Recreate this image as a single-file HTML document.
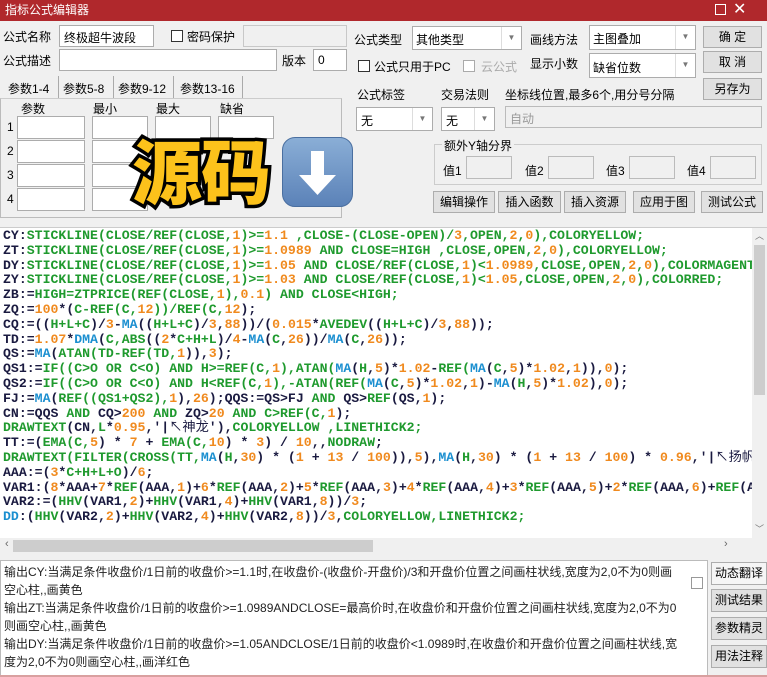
<!DOCTYPE html>
<html><head><meta charset="utf-8"><style>
*{margin:0;padding:0;box-sizing:border-box}
body{width:767px;height:677px;background:#f0f0f0;font-family:"Liberation Sans","Noto Sans CJK SC",sans-serif;font-size:12px;color:#000;position:relative;overflow:hidden}
.a{position:absolute}
.in{position:absolute;background:#fff;border:1px solid #acacac}
.dis{position:absolute;background:#f0f0f0;border:1px solid #c8c8c8}
.btn{position:absolute;background:#e1e1e1;border:1px solid #adadad;text-align:center;font-size:12px;line-height:20px}
.cb{position:absolute;width:12px;height:12px;border:1px solid #333;background:#fff}
.dd{position:absolute;right:0;top:0;bottom:0;width:20px;border-left:1px solid #ddd;text-align:center;color:#777;font-size:8px;line-height:22px}
.code{position:absolute;left:0;top:228px;width:752px;height:310px;background:#fff;overflow:hidden;font-family:"Liberation Mono","Noto Sans CJK SC",monospace;font-weight:bold;font-size:13.2px;line-height:14.8px;padding-top:1px;white-space:pre;color:#1a1a40;padding-left:3px}
.g{color:#1f9a2e}.o{color:#f08a1e}.b{color:#1b8fd0}
</style></head><body>
<div class="a" style="left:0;top:0;width:767px;height:21px;background:#b0282c;color:#fff;font-size:12px;line-height:21px;padding-left:5px">指标公式编辑器</div>
<div class="a" style="left:715px;top:4px;width:11px;height:11px;border:1px solid #fff"></div>
<div class="a" style="left:733px;top:0;color:#fff;font-size:16px;line-height:20px">✕</div>

<div class="a" style="left:3px;top:28px">公式名称</div>
<div class="in" style="left:59px;top:25px;width:95px;height:22px;padding:3px 4px">终极超牛波段</div>
<div class="cb" style="left:171px;top:30px"></div>
<div class="a" style="left:187px;top:28px">密码保护</div>
<div class="dis" style="left:243px;top:25px;width:104px;height:22px"></div>
<div class="a" style="left:3px;top:52px">公式描述</div>
<div class="in" style="left:59px;top:49px;width:218px;height:22px"></div>
<div class="a" style="left:282px;top:52px">版本</div>
<div class="in" style="left:313px;top:49px;width:34px;height:22px;padding:3px 4px">0</div>

<div class="a" style="left:8px;top:80px">参数1-4</div>
<div class="a" style="left:58px;top:76px;width:1px;height:22px;background:#aaa"></div>
<div class="a" style="left:63px;top:80px">参数5-8</div>
<div class="a" style="left:113px;top:76px;width:1px;height:22px;background:#aaa"></div>
<div class="a" style="left:118px;top:80px">参数9-12</div>
<div class="a" style="left:173px;top:76px;width:1px;height:22px;background:#aaa"></div>
<div class="a" style="left:180px;top:80px">参数13-16</div>
<div class="a" style="left:242px;top:76px;width:1px;height:22px;background:#aaa"></div>
<div class="a" style="left:0;top:98px;width:342px;height:120px;border:1px solid #bbb;border-top:1px solid #ccc;background:#f0f0f0"></div>
<div class="a" style="left:21px;top:100px">参数</div>
<div class="a" style="left:93px;top:100px">最小</div>
<div class="a" style="left:156px;top:100px">最大</div>
<div class="a" style="left:220px;top:100px">缺省</div>
<div class="a" style="left:7px;top:120px">1</div><div class="a" style="left:7px;top:144px">2</div><div class="a" style="left:7px;top:168px">3</div><div class="a" style="left:7px;top:192px">4</div>
<div class="in" style="left:17px;top:116px;width:68px;height:23px"></div><div class="in" style="left:92px;top:116px;width:56px;height:23px"></div><div class="in" style="left:155px;top:116px;width:56px;height:23px"></div><div class="in" style="left:218px;top:116px;width:56px;height:23px"></div>
<div class="in" style="left:17px;top:140px;width:68px;height:23px"></div><div class="in" style="left:92px;top:140px;width:56px;height:23px"></div>
<div class="in" style="left:17px;top:164px;width:68px;height:23px"></div><div class="in" style="left:92px;top:164px;width:56px;height:23px"></div>
<div class="in" style="left:17px;top:188px;width:68px;height:23px"></div><div class="in" style="left:92px;top:188px;width:56px;height:23px"></div>

<div class="a" style="left:132px;top:124px;font-family:'Noto Sans CJK SC',sans-serif;font-weight:900;font-size:70px;line-height:90px;color:#fcc21b;-webkit-text-stroke:7px #000;paint-order:stroke fill;letter-spacing:-1px">源码</div>
<div class="a" style="left:282px;top:137px;width:71px;height:70px;border-radius:13px;background:linear-gradient(#8aaed6,#5b82b8);border:1px solid #4a6fa0"></div>
<svg class="a" style="left:282px;top:137px" width="71" height="70"><path d="M29 14h13v24h12L35.5 58 17 38h12z" fill="#fff"/></svg>

<div class="a" style="left:354px;top:31px">公式类型</div>
<div class="in" style="left:412px;top:26px;width:110px;height:24px;padding:4px 3px">其他类型<div class="dd">▼</div></div>
<div class="cb" style="left:358px;top:60px"></div>
<div class="a" style="left:374px;top:58px">公式只用于PC</div>
<div class="cb" style="left:463px;top:60px;border-color:#aaa"></div>
<div class="a" style="left:481px;top:58px;color:#aaa">云公式</div>
<div class="a" style="left:530px;top:31px">画线方法</div>
<div class="in" style="left:589px;top:25px;width:107px;height:25px;padding:4px 3px">主图叠加<div class="dd">▼</div></div>
<div class="a" style="left:530px;top:55px">显示小数</div>
<div class="in" style="left:589px;top:53px;width:107px;height:25px;padding:5px 3px">缺省位数<div class="dd">▼</div></div>
<div class="btn" style="left:703px;top:26px;width:59px;height:22px">确 定</div>
<div class="btn" style="left:703px;top:51px;width:59px;height:22px">取 消</div>
<div class="btn" style="left:703px;top:78px;width:59px;height:22px">另存为</div>
<div class="a" style="left:357px;top:86px">公式标签</div>
<div class="a" style="left:441px;top:86px">交易法则</div>
<div class="a" style="left:505px;top:86px">坐标线位置,最多6个,用分号分隔</div>
<div class="in" style="left:356px;top:107px;width:77px;height:24px;padding:4px 4px">无<div class="dd">▼</div></div>
<div class="in" style="left:441px;top:107px;width:54px;height:24px;padding:4px 4px">无<div class="dd">▼</div></div>
<div class="dis" style="left:505px;top:106px;width:257px;height:22px;padding:3px 4px;color:#999;border-color:#bbb">自动</div>
<div class="a" style="left:434px;top:144px;width:328px;height:41px;border:1px solid #ccc"></div>
<div class="a" style="left:442px;top:137px;background:#f0f0f0;padding:0 2px">额外Y轴分界</div>
<div class="a" style="left:443px;top:162px">值1</div><div class="dis" style="left:466px;top:156px;width:46px;height:23px;border-color:#bbb"></div>
<div class="a" style="left:525px;top:162px">值2</div><div class="dis" style="left:548px;top:156px;width:46px;height:23px;border-color:#bbb"></div>
<div class="a" style="left:606px;top:162px">值3</div><div class="dis" style="left:629px;top:156px;width:46px;height:23px;border-color:#bbb"></div>
<div class="a" style="left:687px;top:162px">值4</div><div class="dis" style="left:710px;top:156px;width:46px;height:23px;border-color:#bbb"></div>
<div class="btn" style="left:433px;top:191px;width:62px;height:22px">编辑操作</div>
<div class="btn" style="left:498px;top:191px;width:63px;height:22px">插入函数</div>
<div class="btn" style="left:564px;top:191px;width:62px;height:22px">插入资源</div>
<div class="btn" style="left:633px;top:191px;width:62px;height:22px">应用于图</div>
<div class="btn" style="left:701px;top:191px;width:62px;height:22px">测试公式</div>

<div class="code">CY:<span class="g">STICKLINE(CLOSE/REF(CLOSE,</span><span class="o">1</span><span class="g">)&gt;=</span><span class="o">1.1</span><span class="g"> ,CLOSE-(CLOSE-OPEN)/</span><span class="o">3</span><span class="g">,OPEN,</span><span class="o">2</span><span class="g">,</span><span class="o">0</span><span class="g">),COLORYELLOW;</span>
ZT:<span class="g">STICKLINE(CLOSE/REF(CLOSE,</span><span class="o">1</span><span class="g">)&gt;=</span><span class="o">1.0989</span><span class="g"> AND CLOSE=HIGH ,CLOSE,OPEN,</span><span class="o">2</span><span class="g">,</span><span class="o">0</span><span class="g">),COLORYELLOW;</span>
DY:<span class="g">STICKLINE(CLOSE/REF(CLOSE,</span><span class="o">1</span><span class="g">)&gt;=</span><span class="o">1.05</span><span class="g"> AND CLOSE/REF(CLOSE,</span><span class="o">1</span><span class="g">)&lt;</span><span class="o">1.0989</span><span class="g">,CLOSE,OPEN,</span><span class="o">2</span><span class="g">,</span><span class="o">0</span><span class="g">),COLORMAGENTA;</span>
ZY:<span class="g">STICKLINE(CLOSE/REF(CLOSE,</span><span class="o">1</span><span class="g">)&gt;=</span><span class="o">1.03</span><span class="g"> AND CLOSE/REF(CLOSE,</span><span class="o">1</span><span class="g">)&lt;</span><span class="o">1.05</span><span class="g">,CLOSE,OPEN,</span><span class="o">2</span><span class="g">,</span><span class="o">0</span><span class="g">),COLORRED;</span>
ZB:=<span class="g">HIGH=ZTPRICE(REF(CLOSE,</span><span class="o">1</span><span class="g">),</span><span class="o">0.1</span><span class="g">) AND CLOSE&lt;HIGH;</span>
ZQ:=<span class="o">100</span>*(<span class="g">C-REF(C,</span><span class="o">12</span><span class="g">))/REF(C,</span><span class="o">12</span>);
CQ:=((<span class="g">H+L+C</span>)/<span class="o">3</span>-<span class="b">MA</span>((<span class="g">H+L+C</span>)/<span class="o">3</span>,<span class="o">88</span>))/(<span class="o">0.015</span>*<span class="g">AVEDEV</span>((<span class="g">H+L+C</span>)/<span class="o">3</span>,<span class="o">88</span>));
TD:=<span class="o">1.07</span>*<span class="b">DMA</span>(<span class="g">C,ABS</span>((<span class="o">2</span>*<span class="g">C+H+L</span>)/<span class="o">4</span>-<span class="b">MA</span>(<span class="g">C</span>,<span class="o">26</span>))/<span class="b">MA</span>(<span class="g">C</span>,<span class="o">26</span>));
QS:=<span class="b">MA</span>(<span class="g">ATAN(TD-REF(TD,</span><span class="o">1</span>)),<span class="o">3</span>);
QS1:=<span class="g">IF((C&gt;O OR C&lt;O) AND H&gt;=REF(C,</span><span class="o">1</span><span class="g">),ATAN(</span><span class="b">MA</span>(<span class="g">H</span>,<span class="o">5</span>)*<span class="o">1.02</span>-<span class="g">REF(</span><span class="b">MA</span>(<span class="g">C</span>,<span class="o">5</span>)*<span class="o">1.02</span>,<span class="o">1</span>)),<span class="o">0</span>);
QS2:=<span class="g">IF((C&gt;O OR C&lt;O) AND H&lt;REF(C,</span><span class="o">1</span><span class="g">),-ATAN(REF(</span><span class="b">MA</span>(<span class="g">C</span>,<span class="o">5</span>)*<span class="o">1.02</span>,<span class="o">1</span>)-<span class="b">MA</span>(<span class="g">H</span>,<span class="o">5</span>)*<span class="o">1.02</span>),<span class="o">0</span>);
FJ:=<span class="b">MA</span>(<span class="g">REF((QS1+QS2),</span><span class="o">1</span>),<span class="o">26</span>);QQS:=QS&gt;FJ <span class="g">AND</span> QS&gt;<span class="g">REF</span>(QS,<span class="o">1</span>);
CN:=QQS <span class="g">AND</span> CQ&gt;<span class="o">200</span> <span class="g">AND</span> ZQ&gt;<span class="o">20</span> <span class="g">AND C&gt;REF(C,</span><span class="o">1</span>);
<span class="g">DRAWTEXT</span>(CN,<span class="g">L</span>*<span class="o">0.95</span>,'|<span style="font-weight:normal">↖神龙</span>'),<span class="g">COLORYELLOW ,LINETHICK2;</span>
TT:=(<span class="g">EMA(C,</span><span class="o">5</span>) * <span class="o">7</span> + <span class="g">EMA(C,</span><span class="o">10</span>) * <span class="o">3</span>) / <span class="o">10</span>,,<span class="g">NODRAW</span>;
<span class="g">DRAWTEXT(FILTER(CROSS(TT,</span><span class="b">MA</span>(<span class="g">H</span>,<span class="o">30</span>) * (<span class="o">1</span> + <span class="o">13</span> / <span class="o">100</span>)),<span class="o">5</span>),<span class="b">MA</span>(<span class="g">H</span>,<span class="o">30</span>) * (<span class="o">1</span> + <span class="o">13</span> / <span class="o">100</span>) * <span class="o">0.96</span>,'|<span style="font-weight:normal">↖扬帆</span>');
AAA:=(<span class="o">3</span>*<span class="g">C+H+L+O</span>)/<span class="o">6</span>;
VAR1:(<span class="o">8</span>*AAA+<span class="o">7</span>*<span class="g">REF</span>(AAA,<span class="o">1</span>)+<span class="o">6</span>*<span class="g">REF</span>(AAA,<span class="o">2</span>)+<span class="o">5</span>*<span class="g">REF</span>(AAA,<span class="o">3</span>)+<span class="o">4</span>*<span class="g">REF</span>(AAA,<span class="o">4</span>)+<span class="o">3</span>*<span class="g">REF</span>(AAA,<span class="o">5</span>)+<span class="o">2</span>*<span class="g">REF</span>(AAA,<span class="o">6</span>)+<span class="g">REF</span>(AAA,<span class="o">8</span>))/<span class="o">36</span>;
VAR2:=(<span class="g">HHV</span>(VAR1,<span class="o">2</span>)+<span class="g">HHV</span>(VAR1,<span class="o">4</span>)+<span class="g">HHV</span>(VAR1,<span class="o">8</span>))/<span class="o">3</span>;
<span class="b">DD</span>:(<span class="g">HHV</span>(VAR2,<span class="o">2</span>)+<span class="g">HHV</span>(VAR2,<span class="o">4</span>)+<span class="g">HHV</span>(VAR2,<span class="o">8</span>))/<span class="o">3</span>,<span class="g">COLORYELLOW,LINETHICK2;</span></div>
<div class="a" style="left:0;top:227px;width:767px;height:1px;background:#ccc"></div>
<div class="a" style="left:752px;top:228px;width:15px;height:310px;background:#f0f0f0"></div>
<div class="a" style="left:754px;top:245px;width:11px;height:150px;background:#cdcdcd"></div>
<div class="a" style="left:755px;top:229px;font-size:9px;color:#777">︿</div>
<div class="a" style="left:755px;top:522px;font-size:9px;color:#777">﹀</div>
<div class="a" style="left:0;top:538px;width:752px;height:16px;background:#f0f0f0"></div>
<div class="a" style="left:13px;top:540px;width:360px;height:12px;background:#cdcdcd"></div>
<div class="a" style="left:5px;top:538px;font-size:11px;color:#666">‹</div>
<div class="a" style="left:724px;top:538px;font-size:11px;color:#666">›</div>

<div class="a" style="left:0;top:560px;width:708px;height:117px;background:#fff;border:1px solid #bbb"></div>
<div class="a" style="left:4px;top:563px;width:680px;font-size:12px;line-height:18px;color:#222">输出CY:当满足条件收盘价/1日前的收盘价&gt;=1.1时,在收盘价-(收盘价-开盘价)/3和开盘价位置之间画柱状线,宽度为2,0不为0则画空心柱,,画黄色<br>输出ZT:当满足条件收盘价/1日前的收盘价&gt;=1.0989ANDCLOSE=最高价时,在收盘价和开盘价位置之间画柱状线,宽度为2,0不为0则画空心柱,,画黄色<br>输出DY:当满足条件收盘价/1日前的收盘价&gt;=1.05ANDCLOSE/1日前的收盘价&lt;1.0989时,在收盘价和开盘价位置之间画柱状线,宽度为2,0不为0则画空心柱,,画洋红色</div>
<div class="cb" style="left:691px;top:577px;border-color:#999"></div>
<div class="btn" style="left:711px;top:562px;width:56px;height:23px;background:#f5f5f5">动态翻译</div>
<div class="btn" style="left:711px;top:589px;width:56px;height:23px">测试结果</div>
<div class="btn" style="left:711px;top:617px;width:56px;height:23px">参数精灵</div>
<div class="btn" style="left:711px;top:645px;width:56px;height:23px">用法注释</div>
<div class="a" style="left:0;top:675px;width:767px;height:2px;background:#d9a0a0"></div>
</body></html>
